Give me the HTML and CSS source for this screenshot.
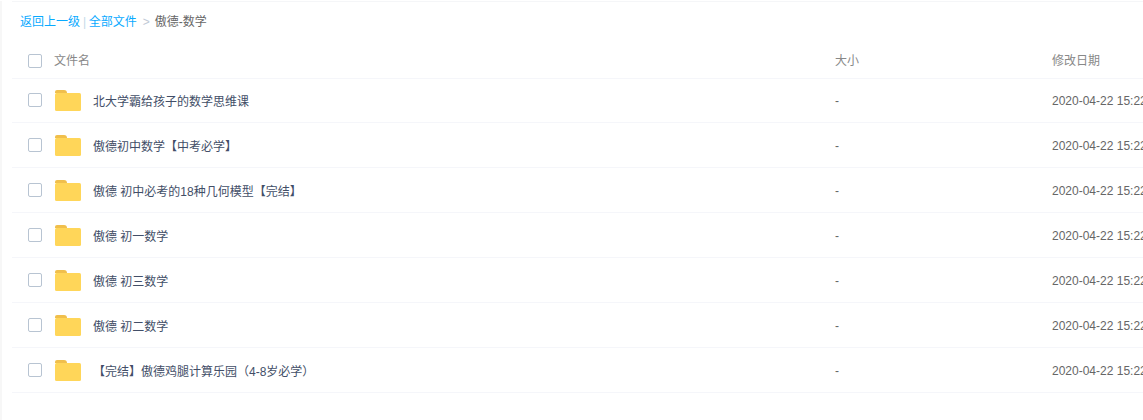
FILE: index.html
```html
<!DOCTYPE html>
<html lang="zh-CN">
<head>
  <meta charset="UTF-8">
  <meta name="viewport" content="width=device-width, initial-scale=1.0">
  <title>傲德-数学</title>
  <link rel="stylesheet" href="styles.css">
</head>
<body>
  <div class="page">
    <div class="crumbs">
      <a href="#">返回上一级</a><span class="bar">|</span><a href="#">全部文件</a><span class="arrow">&gt;</span><span class="current">傲德-数学</span>
    </div>

    <div class="row head">
      <span class="check"></span>
      <span class="name">文件名</span>
      <span class="size">大小</span>
      <span class="date">修改日期</span>
    </div>

    <div class="row">
      <span class="check"></span>
      <svg class="folder" viewBox="0 0 26 21"><path class="tab" d="M0 2a2 2 0 0 1 2-2h7a3 3 0 0 1 3 3h-12z"/><rect class="body-f" x="0" y="3" width="26" height="18" rx="1.5"/></svg>
      <span class="name">北大学霸给孩子的数学思维课</span>
      <span class="size">-</span>
      <span class="date">2020-04-22 15:22</span>
    </div>
    <div class="row">
      <span class="check"></span>
      <svg class="folder" viewBox="0 0 26 21"><path class="tab" d="M0 2a2 2 0 0 1 2-2h7a3 3 0 0 1 3 3h-12z"/><rect class="body-f" x="0" y="3" width="26" height="18" rx="1.5"/></svg>
      <span class="name">傲德初中数学【中考必学】</span>
      <span class="size">-</span>
      <span class="date">2020-04-22 15:22</span>
    </div>
    <div class="row">
      <span class="check"></span>
      <svg class="folder" viewBox="0 0 26 21"><path class="tab" d="M0 2a2 2 0 0 1 2-2h7a3 3 0 0 1 3 3h-12z"/><rect class="body-f" x="0" y="3" width="26" height="18" rx="1.5"/></svg>
      <span class="name">傲德 初中必考的18种几何模型【完结】</span>
      <span class="size">-</span>
      <span class="date">2020-04-22 15:22</span>
    </div>
    <div class="row">
      <span class="check"></span>
      <svg class="folder" viewBox="0 0 26 21"><path class="tab" d="M0 2a2 2 0 0 1 2-2h7a3 3 0 0 1 3 3h-12z"/><rect class="body-f" x="0" y="3" width="26" height="18" rx="1.5"/></svg>
      <span class="name">傲德 初一数学</span>
      <span class="size">-</span>
      <span class="date">2020-04-22 15:22</span>
    </div>
    <div class="row">
      <span class="check"></span>
      <svg class="folder" viewBox="0 0 26 21"><path class="tab" d="M0 2a2 2 0 0 1 2-2h7a3 3 0 0 1 3 3h-12z"/><rect class="body-f" x="0" y="3" width="26" height="18" rx="1.5"/></svg>
      <span class="name">傲德 初三数学</span>
      <span class="size">-</span>
      <span class="date">2020-04-22 15:22</span>
    </div>
    <div class="row">
      <span class="check"></span>
      <svg class="folder" viewBox="0 0 26 21"><path class="tab" d="M0 2a2 2 0 0 1 2-2h7a3 3 0 0 1 3 3h-12z"/><rect class="body-f" x="0" y="3" width="26" height="18" rx="1.5"/></svg>
      <span class="name">傲德 初二数学</span>
      <span class="size">-</span>
      <span class="date">2020-04-22 15:22</span>
    </div>
    <div class="row">
      <span class="check"></span>
      <svg class="folder" viewBox="0 0 26 21"><path class="tab" d="M0 2a2 2 0 0 1 2-2h7a3 3 0 0 1 3 3h-12z"/><rect class="body-f" x="0" y="3" width="26" height="18" rx="1.5"/></svg>
      <span class="name">【完结】傲德鸡腿计算乐园（4-8岁必学）</span>
      <span class="size">-</span>
      <span class="date">2020-04-22 15:22</span>
    </div>
  </div>
</body>
</html>
```

FILE: styles.css
```css
html, body {
  margin: 0;
  height: 100%;
  overflow: hidden;
  background: #fff;
}

body {
  font-family: "Liberation Sans", "Noto Sans CJK SC", sans-serif;
  font-size: 12px;
  color: #424e67;
}

.page {
  box-sizing: border-box;
  width: 1160px;
  height: 420px;
  margin-left: 2px;
  padding-left: 10px;
  box-shadow: -2px 0 0 #f7f7f7;
}

.crumbs {
  height: 40px;
  margin-top: 1px;
  padding-left: 8px;
  line-height: 40px;
  border-top: 1px solid #f5f6f8;
  white-space: nowrap;
}

.crumbs a {
  color: #09aaff;
  text-decoration: none;
}

.bar {
  margin: 0 2.5px 0 3px;
  color: #c5d9e8;
}

.arrow {
  margin: 0 5px 0 6px;
  color: #c0c9d6;
}

.current {
  color: #666;
}

.row {
  display: flex;
  align-items: center;
  height: 44px;
  border-bottom: 1px solid #f5f6fa;
  white-space: nowrap;
}

.row.head {
  height: 36px;
  color: #888;
}

.check {
  box-sizing: border-box;
  flex: none;
  width: 14px;
  height: 14px;
  margin-left: 16px;
  border: 1px solid #b8c4d2;
  border-radius: 2px;
  background: #fff;
}

.folder {
  flex: none;
  width: 26px;
  height: 21px;
  margin-top: 1px;
  margin-left: 13px;
}

.tab {
  fill: #f0bf4c;
}

.body-f {
  fill: #ffd659;
}

.name {
  flex: none;
  width: 742px;
  margin-left: 12px;
}

.size {
  flex: none;
  width: 217px;
  margin-top: 2px;
  color: #666;
}

.date {
  flex: none;
  margin-top: 2px;
  color: #666;
}

/* header row sits a touch off-centre */
.head .check {
  margin-top: 2px;
}

.head .name {
  width: 781px;
  margin-bottom: 2px;
}

.head .size,
.head .date {
  margin-top: 0;
  margin-bottom: 2px;
  color: #888;
}

/* first row is 1px shorter than the rest */
.head + .row {
  height: 43px;
}

.head + .row .check,
.head + .row .name {
  margin-bottom: 1px;
}

.head + .row .folder {
  margin-top: 0;
}

.head + .row .size,
.head + .row .date {
  margin-top: 0;
}
```
